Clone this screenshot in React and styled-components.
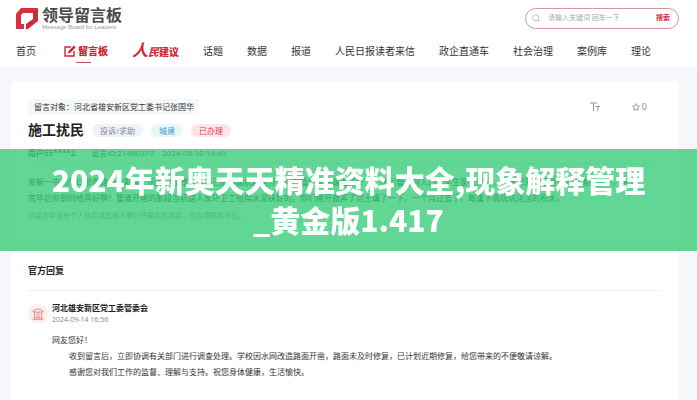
import React from 'react';
import styled, { createGlobalStyle } from 'styled-components';

const GlobalStyle = createGlobalStyle`
  * {
    box-sizing: border-box;
  }
  body {
    margin: 0;
    background: #f5f7fa;
    color: #333;
    font-family: 'Open Sans', 'Noto Sans CJK SC', sans-serif;
    font-size: 8px;
    line-height: 16px;
  }
  h1, h2, h3, p {
    margin: 0;
  }
`;

const Page = styled.div`
  min-height: 100vh;
  display: flex;
  flex-direction: column;
`;

const Header = styled.header`
  background: #fff;
  padding: 6px 18px 0 16px;
`;

const HeaderTop = styled.div`
  display: flex;
  justify-content: space-between;
  align-items: center;
  height: 24px;
`;

const Brand = styled.a`
  display: flex;
  align-items: center;
  gap: 3px;
  color: #4a4a4c;
  text-decoration: none;
`;

const BrandText = styled.span`
  display: flex;
  flex-direction: column;
`;

const BrandName = styled.strong`
  font-size: 16px;
  line-height: 18px;
  font-weight: 700;
`;

const BrandSub = styled.span`
  font-family: 'Liberation Sans', sans-serif;
  font-size: 6px;
  line-height: 6px;
  color: #999;
`;

const SearchForm = styled.form`
  display: flex;
  align-items: center;
  gap: 8px;
  width: 154px;
  height: 21px;
  padding: 0 8px 0 6px;
  border: 1px solid #dc9297;
  border-radius: 11px;
`;

const SearchInput = styled.input`
  flex: 1;
  min-width: 0;
  padding: 0;
  border: 0;
  outline: 0;
  background: none;
  font: inherit;
  font-size: 7px;

  &::placeholder {
    color: #aaa;
  }
`;

const SearchButton = styled.button`
  padding: 0;
  border: 0;
  background: none;
  font: inherit;
  font-size: 7px;
  font-weight: 700;
  color: #c9303a;
`;

const Nav = styled.nav`
  display: flex;
  gap: 24px;
  height: 37px;
  padding-top: 4px;
  align-items: center;
`;

const NavLink = styled.a`
  position: relative;
  display: flex;
  align-items: center;
  gap: 2px;
  padding-left: ${(p) => (p.$active ? '4px' : '0')};
  color: ${(p) => (p.$red ? '#cf2630' : '#333')};
  font-size: 10px;
  font-weight: ${(p) => (p.$red ? 900 : 400)};
  text-decoration: none;
  white-space: nowrap;
`;

const Underline = styled.span`
  position: absolute;
  left: 16px;
  bottom: -4px;
  width: 15px;
  height: 1px;
  background: #b9545a;
`;

const Brush = styled.span`
  font-size: ${(p) => (p.$large ? '16px' : '11px')};
  font-style: italic;
  font-weight: 700;
`;

const Main = styled.main`
  flex: 1;
  display: flex;
  flex-direction: column;
  gap: 7px;
  padding: 14px 18px 0 11px;
`;

const Card = styled.section`
  flex: ${(p) => (p.$grow ? 1 : 'none')};
  padding: ${(p) => (p.$grow ? '14px' : '18px')} 17px 16px;
  background: #fff;
  border-radius: ${(p) => (p.$grow ? '5px 5px 0 0' : '5px')};
`;

const Row = styled.div`
  display: flex;
  align-items: center;
  justify-content: space-between;
`;

const Target = styled.span`
  padding: 0 5px 0 6px;
  background: #f7f8fa;
`;

const Tools = styled.div`
  display: flex;
  gap: 32px;
  padding-right: 15px;
`;

const ToolButton = styled.button`
  display: flex;
  align-items: center;
  gap: 2px;
  padding: 0;
  border: 0;
  background: none;
  color: #888;
  font: inherit;
  font-size: 9px;
`;

const TitleRow = styled.div`
  display: flex;
  align-items: center;
  gap: 8px;
  padding-top: 5px;
`;

const Title = styled.h1`
  font-size: 14px;
  line-height: 20px;
  color: #222;
`;

const Tag = styled.span`
  padding: 0 8px;
  border-radius: 7px;
  line-height: 13px;
  color: ${(p) => p.$color};
  background: ${(p) => p.$bg};
`;

const Meta = styled.div`
  display: flex;
  gap: 8px;
  padding: 5px 0 2px;
  border-bottom: 1px solid #e6e8ea;
  color: #555;
`;

const User = styled.strong`
  margin-right: 8px;
  font-weight: 600;
`;

const Message = styled.p`
  padding-top: 10px;
  white-space: nowrap;
`;

const Note = styled.p`
  padding: 2px 0;
  font-size: 7px;
  color: #999;
`;

const SectionTitle = styled.h2`
  padding-bottom: 11px;
  border-bottom: 1px solid #f0f1f3;
  font-size: 9px;
  color: #222;
`;

const Reply = styled.article`
  display: flex;
  align-items: flex-start;
  gap: 4px;
  padding-top: 11px;
`;

const Avatar = styled.span`
  display: flex;
  align-items: center;
  justify-content: center;
  flex: none;
  width: 20px;
  height: 20px;
  margin-top: 2px;
  border-radius: 50%;
  background: #fdeeee;
`;

const Author = styled.h3`
  font-size: 8px;
  line-height: 12px;
  color: #222;
`;

const ReplyDate = styled.time`
  display: block;
  font-size: 7px;
  line-height: 12px;
  color: #888;
`;

const ReplyText = styled.div`
  padding-top: 6px;
`;

const Paragraph = styled.p`
  text-indent: ${(p) => (p.$indent ? '17px' : '0')};
`;

const Overlay = styled.div`
  position: fixed;
  inset: 0;
  display: flex;
  align-items: center;
`;

const Banner = styled.div`
  flex: 1;
  padding: 10px 0 12px;
  background: rgba(46, 200, 112, 0.75);
  color: #fff;
  font-family: 'Noto Sans CJK SC', sans-serif;
  font-size: 30px;
  font-weight: 900;
  line-height: 40px;
  text-align: center;
`;

const LogoIcon = () => (
  <svg width="23" height="23" viewBox="0 0 23 23" aria-hidden="true">
    <path d="M5 1H22L18 6H7L5 8V17H8V22H0V7Z" fill="#d5303b" />
    <path d="M22 1V14L12 22H10V17L17 12V6Z" fill="#c92f3a" />
  </svg>
);

const PencilIcon = () => (
  <svg width="12" height="12" viewBox="0 0 12 12" fill="none" aria-hidden="true">
    <path d="M7 2H1V11H10V6" stroke="#cf2630" strokeWidth="1.4" />
    <path d="M4 8.5L4.6 6L10 0.6L11.8 2.2L6.4 7.8Z" fill="#cf2630" />
  </svg>
);

const SearchIcon = () => (
  <svg width="8" height="8" viewBox="0 0 8 8" fill="none" stroke="#aaa" strokeWidth="0.8" aria-hidden="true">
    <circle cx="3.7" cy="3.7" r="3.1" />
    <path d="M6 6L7.6 7.6" />
  </svg>
);

const TextSizeIcon = () => (
  <svg width="10" height="10" viewBox="0 0 10 10" fill="none" stroke="#888" strokeWidth="0.9" aria-hidden="true">
    <path d="M0 1H7M3.5 1V9M5.5 4.5H10M7.8 4.5V9" />
  </svg>
);

const StarIcon = () => (
  <svg width="8" height="8" viewBox="0 0 10 10" fill="none" stroke="#888" aria-hidden="true">
    <path d="M5 0.8L6.3 3.6L9.4 4L7.1 6.1L7.7 9.2L5 7.7L2.3 9.2L2.9 6.1L0.6 4L3.7 3.6Z" />
  </svg>
);

const HallIcon = () => (
  <svg width="12" height="12" viewBox="0 0 12 12" fill="none" stroke="#df8585" strokeWidth="0.9" aria-hidden="true">
    <path d="M1 4V3L6 0.8L11 3V4ZM2.5 4V10M5 4V10M7 4V10M9.5 4V10M1.5 10H10.5M0.5 11.3H11.5" />
  </svg>
);

const links = ['话题', '数据', '报道', '人民日报读者来信', '政企直通车', '社会治理', '案例库', '理论'];

const App = () => {
  return (
    <Page>
      <GlobalStyle />
      <Header>
        <HeaderTop>
          <Brand href="#">
            <LogoIcon />
            <BrandText>
              <BrandName>领导留言板</BrandName>
              <BrandSub>Message Board for Leaders</BrandSub>
            </BrandText>
          </Brand>
          <SearchForm onSubmit={(e) => e.preventDefault()}>
            <SearchIcon />
            <SearchInput aria-label="搜索" placeholder="请输入关键词 回车一下" />
            <SearchButton type="submit">搜索</SearchButton>
          </SearchForm>
        </HeaderTop>
        <Nav>
          <NavLink href="#">首页</NavLink>
          <NavLink href="#" $red $active>
            <PencilIcon />
            留言板
            <Underline />
          </NavLink>
          <NavLink href="#" $red>
            <span>
              <Brush $large>人</Brush>
              <Brush>民</Brush>
              建议
            </span>
          </NavLink>
          {links.map((text) => (
            <NavLink key={text} href="#">{text}</NavLink>
          ))}
        </Nav>
      </Header>

      <Main>
        <Card>
          <Row>
            <Target>留言对象：河北省雄安新区党工委书记张国华</Target>
            <Tools>
              <ToolButton aria-label="字号"><TextSizeIcon /></ToolButton>
              <ToolButton><StarIcon />0</ToolButton>
            </Tools>
          </Row>
          <TitleRow>
            <Title>施工扰民</Title>
            <Tag $color="#7c8799" $bg="#f0f2f7">投诉/求助</Tag>
            <Tag $color="#3c9cc8" $bg="#e9f6fc">城建</Tag>
            <Tag $color="#d8434d" $bg="#fde6e8">已办理</Tag>
          </TitleRow>
          <Meta>
            <User>用户55****2</User>
            <span>留言ID:21480377</span>
            <span>2024-08-30 14:49</span>
          </Meta>
          <Message>
            安新一中的门口那条路台阶前面，因为学校改管道自己把路面机器凿开，没有管好就把路面弄坏了，然后管道向入口的学生家长通行，一直都没有把凿开的那路面修好，施工
            <br />
            完毕后你到时给弄好啊！管道开凿的那段当初是人家环卫工给用水泥抹好的。你们凿开就弄了点土填了一下，一个月过去了，每逢下雨坑坑洼洼的积水。
          </Message>
          <Note>该留言中含有个人信息或其他不便公开展示的内容，仅办理机构可见。</Note>
        </Card>

        <Card $grow>
          <SectionTitle>官方回复</SectionTitle>
          <Reply>
            <Avatar><HallIcon /></Avatar>
            <div>
              <Author>河北雄安新区党工委管委会</Author>
              <ReplyDate>2024-09-14 16:56</ReplyDate>
              <ReplyText>
                <Paragraph>网友您好！</Paragraph>
                <Paragraph $indent>
                  收到留言后，立即协调有关部门进行调查处理。学校因水网改造路面开凿，路面未及时修复，已计划近期修复，给您带来的不便敬请谅解。
                </Paragraph>
                <Paragraph $indent>感谢您对我们工作的监督、理解与支持。祝您身体健康，生活愉快。</Paragraph>
              </ReplyText>
            </div>
          </Reply>
        </Card>
      </Main>

      <Overlay>
        <Banner>
          2024年新奥天天精准资料大全,现象解释管理
          <br />
          _黄金版1.417
        </Banner>
      </Overlay>
    </Page>
  );
};

export default App;
